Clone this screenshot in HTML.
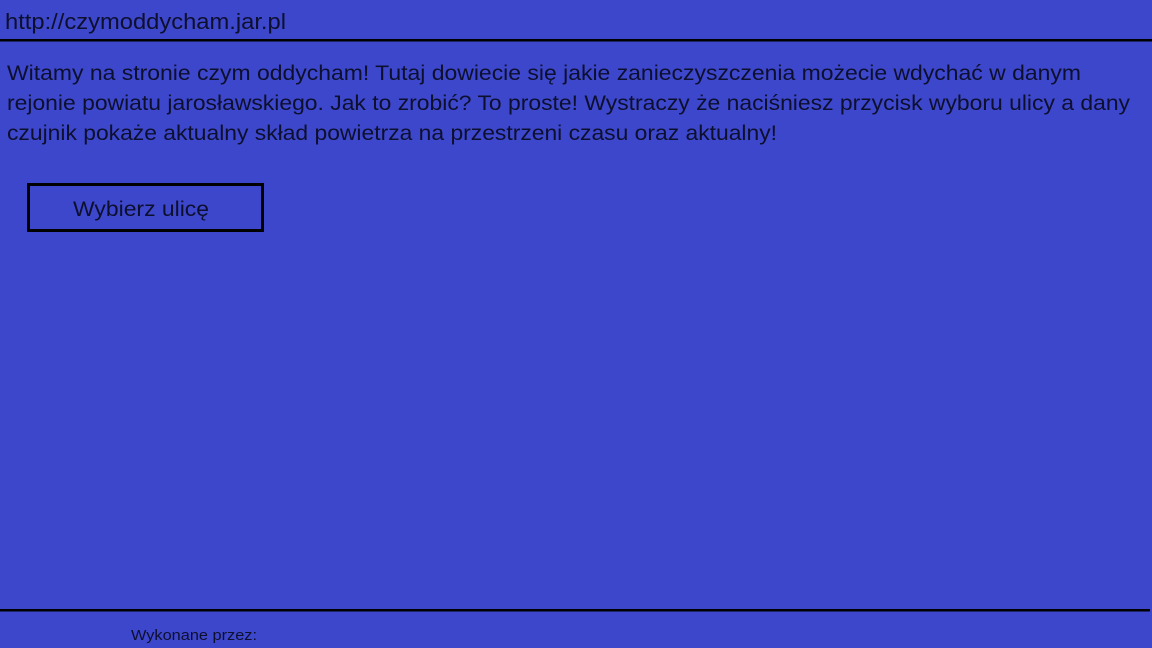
<!DOCTYPE html>
<html><head><meta charset="utf-8"><style>
html,body{margin:0;padding:0;width:1152px;height:648px;background:#3d47cc;overflow:hidden}
svg{display:block}
text{font-family:"Liberation Sans",sans-serif;fill:#0d0f2e}
</style></head><body>
<svg width="1152" height="648" viewBox="0 0 1152 648">
<rect width="1152" height="648" fill="#3d47cc"/>
<text x="5" y="29" font-size="22" textLength="281" lengthAdjust="spacingAndGlyphs">http://czymoddycham.jar.pl</text>
<rect x="0" y="39" width="1152" height="2.5" fill="#000"/>
<text x="7" y="80" font-size="21" textLength="1074" lengthAdjust="spacingAndGlyphs">Witamy na stronie czym oddycham! Tutaj dowiecie się jakie zanieczyszczenia możecie wdychać w danym</text>
<text x="7" y="110" font-size="21" textLength="1123" lengthAdjust="spacingAndGlyphs">rejonie powiatu jarosławskiego. Jak to zrobić? To proste! Wystraczy że naciśniesz przycisk wyboru ulicy a dany</text>
<text x="7" y="140" font-size="21" textLength="770" lengthAdjust="spacingAndGlyphs">czujnik pokaże aktualny skład powietrza na przestrzeni czasu oraz aktualny!</text>
<rect x="28.5" y="184.5" width="234" height="46" fill="none" stroke="#000" stroke-width="3"/>
<text x="73" y="216" font-size="21" textLength="136" lengthAdjust="spacingAndGlyphs">Wybierz ulicę</text>
<rect x="0" y="609" width="1150" height="2.5" fill="#000"/>
<text x="131" y="640" font-size="15" textLength="126" lengthAdjust="spacingAndGlyphs">Wykonane przez:</text>
</svg>
</body></html>
